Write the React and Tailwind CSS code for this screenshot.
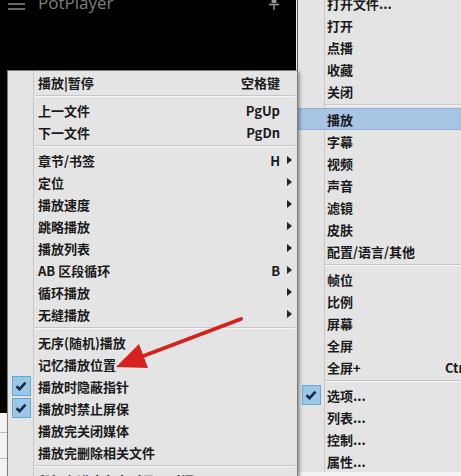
import React from "react";

const FONT = { fontFamily: '"Noto Sans CJK SC", "Noto Sans", sans-serif' };

// 播放 submenu (opens to the left of the main menu)
const playItems = [
  { label: "播放|暂停", key: "空格键" },
  { sep: true },
  { label: "上一文件", key: "PgUp" },
  { label: "下一文件", key: "PgDn" },
  { sep: true },
  { label: "章节/书签", key: "H", sub: true },
  { label: "定位", sub: true },
  { label: "播放速度", sub: true },
  { label: "跳略播放", sub: true },
  { label: "播放列表", sub: true },
  { label: "AB 区段循环", key: "B", sub: true },
  { label: "循环播放", sub: true },
  { label: "无缝播放", sub: true },
  { sep: true },
  { label: "无序(随机)播放" },
  { label: "记忆播放位置" },
  { label: "播放时隐蔽指针", checked: true },
  { label: "播放时禁止屏保", checked: true },
  { label: "播放完关闭媒体" },
  { label: "播放完删除相关文件" },
  { sep: true },
  { label: "鼠标在进度条上时显示时间" },
];

// main right-click menu
const mainItems = [
  { label: "打开文件..." },
  { label: "打开" },
  { label: "点播" },
  { label: "收藏" },
  { label: "关闭" },
  { sep: true },
  { label: "播放", active: true },
  { label: "字幕" },
  { label: "视频" },
  { label: "声音" },
  { label: "滤镜" },
  { label: "皮肤" },
  { label: "配置/语言/其他" },
  { sep: true },
  { label: "帧位" },
  { label: "比例" },
  { label: "屏幕" },
  { label: "全屏" },
  { label: "全屏+", key: "Ctrl+Enter" },
  { sep: true },
  { label: "选项...", checked: true },
  { label: "列表..." },
  { label: "控制..." },
  { label: "属性..." },
];

function CheckBox() {
  return (
    <div className="w-[19px] h-[20px] bg-[#9cc8e8] border border-[#6aa6d6] flex items-center justify-center">
      <svg width="12" height="10" viewBox="0 0 12 10">
        <path d="M1.5 5.2 L4.6 8.2 L10.5 1.6" fill="none" stroke="#1c2a48" strokeWidth="2.6" />
      </svg>
    </div>
  );
}

function SubArrow() {
  return (
    <svg width="5" height="8" viewBox="0 0 5 8">
      <polygon points="0,0 5,4 0,8" fill="#222" />
    </svg>
  );
}

function PlayMenu() {
  return (
    <div className="absolute left-[7px] top-[70px] w-[291px] bg-[#e4e4e4] border border-[#7c7c7c] shadow-[2px_2px_3px_rgba(0,0,0,0.35)] text-[13px] text-[#1a1a1a] font-semibold" style={FONT}>
      {playItems.map((it, i) =>
        it.sep ? (
          <div key={i} className="flex h-[6px]">
            <div className="w-[26px] border-r border-[#c9c9c9]" />
            <div className="flex-1 flex items-center pl-[1px] pr-[2px]">
              <div className="w-full h-[2px] border-t border-[#c6c6c6] border-b border-b-[#f6f6f6]" />
            </div>
          </div>
        ) : (
          <div key={i} className="flex h-[22px] items-center">
            <div className="w-[26px] h-full border-r border-[#c9c9c9] flex items-center justify-center pl-[1px]">
              {it.checked && <CheckBox />}
            </div>
            <div className="flex-1 pl-[4px] leading-none whitespace-nowrap">{it.label}</div>
            <div className="leading-none">{it.key}</div>
            <div className="w-[17px] flex justify-center pl-[2px]">{it.sub && <SubArrow />}</div>
          </div>
        )
      )}
    </div>
  );
}

function MainMenu() {
  return (
    <div className="absolute left-[297px] top-[-8px] w-[260px] bg-[#e4e4e4] border-l border-[#555] text-[13px] text-[#1a1a1a] font-semibold" style={FONT}>
      {mainItems.map((it, i) =>
        it.sep ? (
          <div key={i} className="flex h-[6px]">
            <div className="w-[27px] border-r border-[#c9c9c9]" />
            <div className="flex-1 flex items-center">
              <div className="w-full h-[2px] border-t border-[#c6c6c6] border-b border-b-[#f6f6f6]" />
            </div>
          </div>
        ) : (
          <div
            key={i}
            className={
              it.active
                ? "flex h-[22px] items-center bg-[#a7c4e4] border-y border-[#93b4da]"
                : "flex h-[22px] items-center"
            }
          >
            <div
              className={
                it.active
                  ? "w-[27px] h-full flex items-center justify-center"
                  : "w-[27px] h-full border-r border-[#c9c9c9] flex items-center justify-center"
              }
            >
              {it.checked && <CheckBox />}
            </div>
            <div className="w-[120px] pl-[2px] leading-none whitespace-nowrap">{it.label}</div>
            <div className="leading-none">{it.key}</div>
          </div>
        )
      )}
    </div>
  );
}

function PlayerWindow() {
  return (
    <div className="absolute left-0 top-0 w-[296px] h-[413px] bg-black">
      <div className="flex items-center h-[20px] -mt-[8px] pl-[8px] pr-[14px]">
        <svg width="17" height="14" viewBox="0 0 17 14" className="mt-[6px]">
          <path d="M0 1 H17 M0 6 H17 M0 11 H17" stroke="#8a8a8a" strokeWidth="1.6" />
        </svg>
        <span className="ml-[13px] text-[17px] text-[#7e7e7e] leading-none" style={{ fontFamily: '"Open Sans", sans-serif' }}>
          PotPlayer
        </span>
        <svg width="16" height="18" viewBox="0 0 16 18" className="ml-auto mt-[6px]">
          <path d="M6 0 H10 L10.5 7 H5.5 Z" fill="#9a9a9a" />
          <path d="M3 8.5 H13" stroke="#9a9a9a" strokeWidth="1.6" />
          <path d="M8 9 V14" stroke="#9a9a9a" strokeWidth="1.4" />
        </svg>
      </div>
    </div>
  );
}

export default function App() {
  return (
    <div className="relative w-[461px] h-[476px] overflow-hidden bg-[#f3f3f3]">
      <PlayerWindow />
      {/* bits of the window behind, bottom left */}
      <div className="absolute left-0 top-[432px] w-[7px] border-t border-[#bdbdbd]" />
      <div className="absolute left-0 top-[458px] w-[7px] border-t border-[#bdbdbd]" />
      <MainMenu />
      <PlayMenu />
      <svg className="absolute left-0 top-0" width="461" height="476" viewBox="0 0 461 476">
        <line x1="241" y1="319" x2="138" y2="358" stroke="#d6221e" strokeWidth="4" strokeLinecap="round" />
        <polygon points="116,367 139,344 148,368" fill="#d6221e" />
      </svg>
    </div>
  );
}
